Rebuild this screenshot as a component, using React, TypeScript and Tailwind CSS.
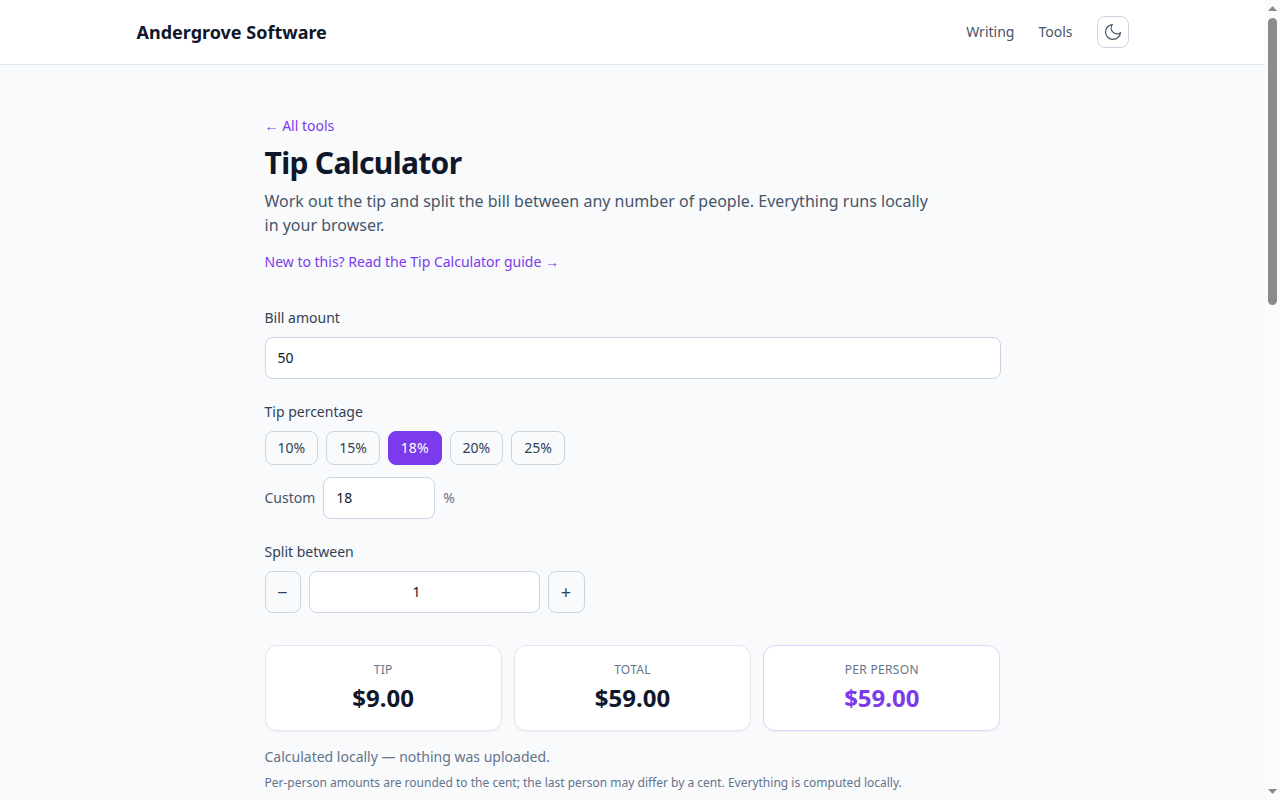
import { useState } from "react"

const presets = [10, 15, 18, 20, 25]

const money = (n: number) => `$${n.toFixed(2)}`

const StatCard = ({ label, value, accent }: { label: string; value: string; accent?: boolean }) => (
  <div className={`rounded-xl border bg-white p-4 text-center shadow-xs ${accent ? "border-[#ddd6fe]" : "border-[#e2e8f0]"}`}>
    <div className="text-xs uppercase tracking-wide text-[#64748b]">{label}</div>
    <div className={`mt-1 text-2xl font-bold ${accent ? "text-[#7c3aed]" : "text-[#0f172a]"}`}>{value}</div>
  </div>
)

const Scrollbar = () => (
  <aside className="flex w-[15px] shrink-0 flex-col items-center bg-[#fbfbfb]">
    <svg width="15" height="15" viewBox="0 0 15 15" className="shrink-0">
      <path d="M3 11 L7.5 6 L12 11 Z" fill="#8b8b8b" />
    </svg>
    <div className="mt-[3px] h-[287px] w-[9px] rounded-[5px] bg-[#8b8b8b]" />
    <svg width="15" height="15" viewBox="0 0 15 15" className="mt-auto shrink-0">
      <path d="M3 4 L12 4 L7.5 9 Z" fill="#8b8b8b" />
    </svg>
  </aside>
)

const App = () => {
  const [bill, setBill] = useState("50")
  const [tip, setTip] = useState(18)
  const [people, setPeople] = useState(1)

  const tipAmount = (Number.parseFloat(bill) || 0) * (tip / 100)
  const total = (Number.parseFloat(bill) || 0) + tipAmount

  const inputStyles = "h-[42px] rounded-lg border border-[#cbd5e1] bg-white px-3 pb-[9px] pt-[7px] text-sm text-[#0f172a] outline-none"

  return (
    <div className="flex h-screen overflow-hidden bg-[#f8fafc] font-['Noto_Sans',sans-serif] text-[#0f172a]">
      <div className="min-w-0 flex-1 overflow-y-auto">
        <header className="border-b border-[#e2e8f0] bg-white">
          <div className="mx-auto flex h-16 max-w-5xl items-center justify-between px-4">
            <a href="#" className="text-lg font-bold text-[#0f172a]">
              Andergrove Software
            </a>
            <nav className="flex items-center gap-6 text-sm text-[#475569]">
              <a href="#">Writing</a>
              <a href="#">Tools</a>
              <button type="button" className="flex h-8 w-8 items-center justify-center rounded-lg border border-[#cbd5e1] text-[#475569]">
                <svg width="20" height="20" viewBox="0 0 24 24" fill="none" stroke="currentColor" strokeWidth="1.5" strokeLinecap="round" strokeLinejoin="round">
                  <path d="M21 12.79A9 9 0 1 1 11.21 3 7 7 0 0 0 21 12.79z" />
                </svg>
              </button>
            </nav>
          </div>
        </header>

        <main className="mx-auto max-w-3xl px-4 pb-12 pt-12">
          <div className="h-6 leading-6">
            <a href="#" className="text-sm text-[#7c3aed]">
              ← All tools
            </a>
          </div>
          <h1 className="mt-2 text-3xl font-bold tracking-[-0.67px] text-[#0f172a]">Tip Calculator</h1>
          <p className="mt-2 max-w-2xl text-base text-[#475569]">
            Work out the tip and split the bill between any number of people. Everything runs locally in your browser.
          </p>
          <div className="mt-3 h-6 leading-6">
            <a href="#" className="text-sm text-[#7c3aed]">
              New to this? Read the Tip Calculator guide →
            </a>
          </div>

          <div className="mt-[35px]">
            <label htmlFor="bill" className="mb-[9px] block text-sm text-[#334155]">
              Bill amount
            </label>
            <input id="bill" type="number" className={`${inputStyles} block w-full`} value={bill} onChange={(e) => setBill(e.target.value)} />
          </div>

          <div className="mt-[23px]">
            <div className="mb-[9px] text-sm text-[#334155]">Tip percentage</div>
            <div className="flex gap-2">
              {presets.map((p) => (
                <button
                  key={p}
                  type="button"
                  onClick={() => setTip(p)}
                  className={`h-[34px] rounded-lg border px-3 text-sm ${
                    tip === p ? "border-[#7c3aed] bg-[#7c3aed] text-white" : "border-[#cbd5e1] text-[#334155]"
                  }`}
                >
                  {p}%
                </button>
              ))}
            </div>
            <div className="mt-3 flex items-center gap-2">
              <label htmlFor="custom" className="text-sm text-[#475569]">
                Custom
              </label>
              <input id="custom" type="number" className={`${inputStyles} w-28`} value={tip} onChange={(e) => setTip(Number(e.target.value))} />
              <span className="text-sm text-[#64748b]">%</span>
            </div>
          </div>

          <div className="mt-[23px]">
            <label htmlFor="people" className="mb-[9px] block text-sm text-[#334155]">
              Split between
            </label>
            <div className="flex items-center gap-2">
              <button type="button" onClick={() => setPeople(Math.max(1, people - 1))} className="h-[42px] w-9 rounded-lg border border-[#cbd5e1] text-lg text-[#334155]">
                −
              </button>
              <input id="people" type="number" className={`${inputStyles} w-[231px] text-center`} value={people} onChange={(e) => setPeople(Number(e.target.value))} />
              <button type="button" onClick={() => setPeople(people + 1)} className="h-[42px] w-[37px] rounded-lg border border-[#cbd5e1] text-lg text-[#334155]">
                +
              </button>
            </div>
          </div>

          <div className="mt-8 grid grid-cols-3 gap-3">
            <StatCard label="Tip" value={money(tipAmount)} />
            <StatCard label="Total" value={money(total)} />
            <StatCard label="Per person" value={money(total / (people || 1))} accent />
          </div>

          <p className="mt-4 text-sm text-[#64748b]">Calculated locally — nothing was uploaded.</p>
          <p className="mt-2 text-xs text-[#64748b]">
            Per-person amounts are rounded to the cent; the last person may differ by a cent. Everything is computed locally.
          </p>
        </main>
      </div>
      <Scrollbar />
    </div>
  )
}

export default App
